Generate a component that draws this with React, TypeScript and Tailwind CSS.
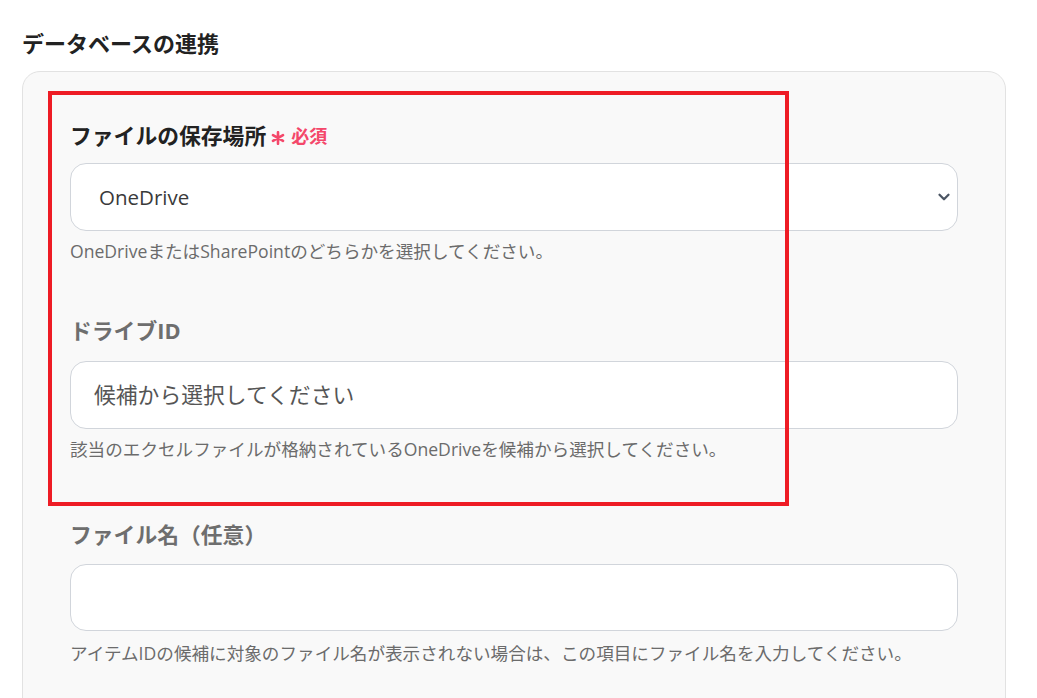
import React from "react";

const font = { fontFamily: '"Open Sans", "Noto Sans CJK JP", sans-serif' };

const Chevron = () => (
  <svg width="18" height="18" viewBox="0 0 24 24" fill="none" stroke="#4b5563" strokeWidth="3" strokeLinecap="round" strokeLinejoin="round">
    <path d="M6 9l6 6 6-6" />
  </svg>
);

const Asterisk = () => (
  <svg width="14" height="14" viewBox="0 0 14 14" fill="none" stroke="#f4476a" strokeWidth="2.6" strokeLinecap="round">
    <path d="M7 1.2v11.6M2 4.1l10 5.8M12 4.1L2 9.9" />
  </svg>
);

const App = () => {
  return (
    <div className="min-h-[698px] bg-white text-[#222] overflow-hidden" style={font}>
      <div className="pl-[22px] pr-[31px] pt-[29px]">
        <h1 className="text-[22px] font-bold leading-[28px]">データベースの連携</h1>

        <div className="relative mt-[14px] rounded-t-[18px] border border-[#e2e2e2] bg-[#f9f9f9] pl-[47px] pr-[47px] pt-[49px] pb-10">
          {/* red annotation frame */}
          <div className="pointer-events-none absolute left-[25px] top-[19px] h-[415px] w-[741px] border-[4.5px] border-[#ee1c25]" />

          <div className="flex h-[30px] items-center">
            <span className="text-[21.8px] font-bold leading-[30px]">ファイルの保存場所</span>
            <span className="ml-[5px] mt-[3px]">
              <Asterisk />
            </span>
            <span className="ml-[6px] text-[18px] font-bold leading-[30px] text-[#f4476a]">必須</span>
          </div>
          <div className="mt-[12px] flex h-[68px] items-center justify-between rounded-[16px] border border-[#d1d5db] bg-white pl-[28px] pr-[4px]">
            <span className="text-[20.5px] text-[#3a3a3a]">OneDrive</span>
            <Chevron />
          </div>
          <p className="mt-[8px] text-[17.6px] leading-[24px] text-[#6b6b6b]">OneDriveまたはSharePointのどちらかを選択してください。</p>

          <div className="mt-[53px] text-[21.8px] font-bold leading-[30px] text-[#6e6e6e]">ドライブID</div>
          <div className="mt-[15px] flex h-[68px] items-center rounded-[16px] border border-[#d1d5db] bg-white pl-[23px]">
            <span className="text-[21.8px] text-[#555]">候補から選択してください</span>
          </div>
          <p className="mt-[8px] text-[17.6px] leading-[24px] text-[#6b6b6b]">該当のエクセルファイルが格納されているOneDriveを候補から選択してください。</p>

          <div className="mt-[59px] text-[21.8px] font-bold leading-[30px] text-[#6e6e6e]">ファイル名（任意）</div>
          <div className="mt-[14px] h-[67px] rounded-[16px] border border-[#d1d5db] bg-white" />
          <p className="mt-[10px] text-[17.6px] leading-[24px] text-[#6b6b6b]">アイテムIDの候補に対象のファイル名が表示されない場合は、この項目にファイル名を入力してください。</p>
        </div>
      </div>
    </div>
  );
};

export default App;
